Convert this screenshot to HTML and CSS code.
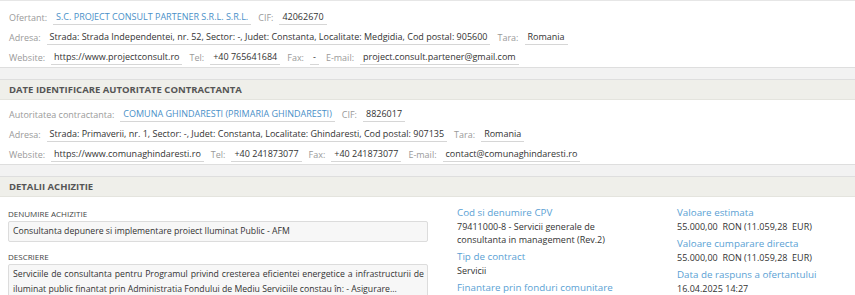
FILE: index.html
```html
<!DOCTYPE html>
<html lang="ro">

<head>
  <meta charset="UTF-8">
  <meta name="viewport" content="width=device-width, initial-scale=1.0">
  <title>Detalii achizitie</title>

  <link rel="stylesheet" href="styles.css">
</head>

<body>
  <div class="panel panel-first">
    <div class="panel-body">
      <div class="row">
        <span class="lbl">Ofertant:</span>
        <span class="val link">S.C. PROJECT CONSULT PARTENER S.R.L. S.R.L.</span>
        <span class="lbl">CIF:</span>
        <span class="val">42062670</span>
      </div>
      <div class="row">
        <span class="lbl">Adresa:</span>
        <span class="val">Strada: Strada Independentei, nr. 52, Sector: -, Judet: Constanta, Localitate: Medgidia, Cod postal: 905600</span>
        <span class="lbl">Tara:</span>
        <span class="val">Romania</span>
      </div>
      <div class="row">
        <span class="lbl">Website:</span>
        <span class="val">https://www.projectconsult.ro</span>
        <span class="lbl">Tel:</span>
        <span class="val">+40 765641684</span>
        <span class="lbl">Fax:</span>
        <span class="val">-</span>
        <span class="lbl">E-mail:</span>
        <span class="val">project.consult.partener@gmail.com</span>
      </div>
    </div>
  </div>

  <div class="panel">
    <div class="panel-head">DATE IDENTIFICARE AUTORITATE CONTRACTANTA</div>
    <div class="panel-body">
      <div class="row">
        <span class="lbl">Autoritatea contractanta:</span>
        <span class="val link">COMUNA GHINDARESTI (PRIMARIA GHINDARESTI)</span>
        <span class="lbl">CIF:</span>
        <span class="val">8826017</span>
      </div>
      <div class="row">
        <span class="lbl">Adresa:</span>
        <span class="val">Strada: Primaverii, nr. 1, Sector: -, Judet: Constanta, Localitate: Ghindaresti, Cod postal: 907135</span>
        <span class="lbl">Tara:</span>
        <span class="val">Romania</span>
      </div>
      <div class="row">
        <span class="lbl">Website:</span>
        <span class="val">https://www.comunaghindaresti.ro</span>
        <span class="lbl">Tel:</span>
        <span class="val">+40 241873077</span>
        <span class="lbl">Fax:</span>
        <span class="val">+40 241873077</span>
        <span class="lbl">E-mail:</span>
        <span class="val">contact@comunaghindaresti.ro</span>
      </div>
    </div>
  </div>

  <div class="panel">
    <div class="panel-head">DETALII ACHIZITIE</div>
    <div class="details">
      <div class="col-main">
        <div class="field-title">DENUMIRE ACHIZITIE</div>
        <div class="field-box">Consultanta depunere si implementare proiect Iluminat Public - AFM</div>
        <div class="field-title">DESCRIERE</div>
        <div class="field-box field-long">Serviciile de consultanta pentru Programul privind cresterea eficientei energetice a infrastructurii de iluminat public finantat prin Administratia Fondului de Mediu Serviciile constau în: - Asigurare...</div>
      </div>
      <div class="col-info">
        <div class="info">
          <div class="info-title">Cod si denumire CPV</div>
          <div class="info-val">79411000-8 - Servicii generale de consultanta in management (Rev.2)</div>
        </div>
        <div class="info">
          <div class="info-title">Tip de contract</div>
          <div class="info-val">Servicii</div>
        </div>
        <div class="info">
          <div class="info-title">Finantare prin fonduri comunitare</div>
        </div>
      </div>
      <div class="col-info">
        <div class="info">
          <div class="info-title">Valoare estimata</div>
          <div class="info-val">55.000,00&nbsp; RON (11.059,28&nbsp; EUR)</div>
        </div>
        <div class="info">
          <div class="info-title">Valoare cumparare directa</div>
          <div class="info-val">55.000,00&nbsp; RON (11.059,28&nbsp; EUR)</div>
        </div>
        <div class="info">
          <div class="info-title">Data de raspuns a ofertantului</div>
          <div class="info-val">16.04.2025 14:27</div>
        </div>
      </div>
    </div>
  </div>
</body>

</html>
```

FILE: styles.css
```css
* {
  padding: 0;
  margin: 0;
  box-sizing: border-box;
}

body {
  background: #f2f2f2;
  font-family: "Open Sans", sans-serif;
  font-size: 9px;
  color: #333;
}

.panel {
  background: #fff;
  border-top: 1px solid #dedede;
  border-bottom: 1px solid #dedede;
  margin-bottom: 11px;
}

.panel-first {
  border-top: 1px solid #e6e6e6;
}

.panel-head {
  height: 20px;
  line-height: 20px;
  padding: 0 9px;
  background: #efefea;
  border-bottom: 1px solid #e4e4de;
  font-size: 9.5px;
  font-weight: bold;
  color: #555;
}

.panel-body {
  padding: 4px 9px 0;
}

.panel-first .panel-body {
  padding-top: 6px;
}

.row {
  display: flex;
  align-items: center;
  height: 20px;
  white-space: nowrap;
}

.lbl {
  color: #9a9a9a;
  margin-right: 6px;
}

.val {
  padding: 0 3px 1px;
  border-bottom: 1px solid #d6d6d6;
  margin-right: 7px;
  line-height: 13px;
}

.link {
  color: #4a90c8;
}

.details {
  display: grid;
  grid-template-columns: 420px 170px 1fr;
  column-gap: 29px;
  padding: 8px 8px 0;
}

.col-info:last-child {
  margin-left: 21px;
}

.field-title {
  font-size: 8px;
  color: #444;
  line-height: 14px;
  margin-top: 2px;
}

.field-box {
  background: #f7f7f7;
  border: 1px solid #dcdcdc;
  border-radius: 2px;
  padding: 3px 4px;
  font-size: 8.7px;
  line-height: 13px;
  margin-bottom: 8px;
}

.field-long {
  height: 40px;
  padding: 2px 3px 0 4px;
  line-height: 15px;
  text-align: justify;
  overflow: hidden;
}

.info {
  margin-bottom: 3px;
}

.info-title {
  color: #5a9fd4;
  font-size: 9.8px;
  line-height: 15px;
}

.info-val {
  line-height: 13px;
}
```
